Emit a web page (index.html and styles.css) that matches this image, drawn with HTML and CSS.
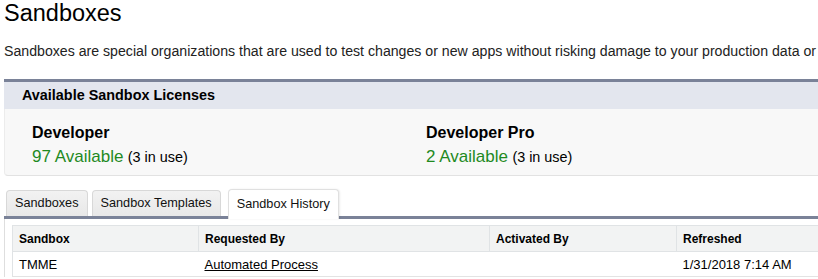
FILE: index.html
```html
<!DOCTYPE html>
<html>
<head>
<meta charset="utf-8">
<link rel="stylesheet" href="styles.css">
</head>
<body>
<div class="page">
  <h1 class="title">Sandboxes</h1>
  <p class="desc">Sandboxes are special organizations that are used to test changes or new apps without risking damage to your production data or</p>

  <div class="panel">
    <div class="panel-head">Available Sandbox Licenses</div>
    <div class="panel-body">
      <div class="lic">
        <div class="lic-name">Developer</div>
        <div class="lic-count"><span class="avail">97 Available</span> <span class="inuse">(3 in use)</span></div>
      </div>
      <div class="lic">
        <div class="lic-name">Developer Pro</div>
        <div class="lic-count"><span class="avail">2 Available</span> <span class="inuse">(3 in use)</span></div>
      </div>
    </div>
  </div>

  <div class="tabs">
    <div class="tab">Sandboxes</div>
    <div class="tab">Sandbox Templates</div>
    <div class="tab active">Sandbox History</div>
  </div>
  <div class="tab-content">
    <table class="list">
      <colgroup>
        <col class="c1"><col class="c2"><col class="c3"><col class="c4">
      </colgroup>
      <thead>
        <tr><th>Sandbox</th><th>Requested By</th><th>Activated By</th><th>Refreshed</th></tr>
      </thead>
      <tbody>
        <tr><td>TMME</td><td><a href="#" class="link">Automated Process</a></td><td></td><td>1/31/2018 7:14 AM</td></tr>
      </tbody>
    </table>
  </div>
</div>
</body>
</html>
```

FILE: styles.css
```css
html, body {
  margin: 0;
  padding: 0;
  overflow: hidden;
  background: #fff;
}
body {
  font-family: "Liberation Sans", Arial, sans-serif;
  color: #000;
}
.page {
  width: 1000px;
  padding-left: 4px;
}
.title {
  margin: 0;
  font-size: 23.5px;
  font-weight: normal;
  line-height: 27px;
}
.desc {
  margin: 17px 0 0;
  font-size: 14.15px;
  line-height: 15px;
  white-space: nowrap;
  color: #222;
}
.panel {
  margin-top: 20px;
  border-top: 3px solid #7a8298;
}
.panel-head {
  background: #e3e6ee;
  height: 27px;
  line-height: 27px;
  padding-left: 18px;
  font-size: 14.4px;
  font-weight: bold;
}
.panel-body {
  display: grid;
  grid-template-columns: 394px 394px;
  background: #f8f8f8;
  padding: 15px 0 8px 27px;
  border-left: 1px solid #ececec;
  border-bottom: 1px solid #e2e2e2;
  border-bottom-left-radius: 4px;
}
.lic-name {
  font-size: 16px;
  font-weight: bold;
  line-height: 18px;
}
.lic-count {
  margin-top: 5px;
  line-height: 20px;
}
.avail {
  font-size: 17px;
  color: #1f8a1f;
}
.inuse {
  font-size: 14.4px;
}
.tabs {
  display: flex;
  align-items: flex-end;
  margin-top: 13px;
  padding-left: 2px;
  border-bottom: 3px solid #7a8298;
  border-top-left-radius: 4px;
}
.tab {
  font-size: 12.7px;
  line-height: 25px;
  padding: 0 8px;
  margin-right: 4px;
  background: linear-gradient(#f2f2f2, #e8e8e8);
  border: 1px solid #d8d8d8;
  border-bottom: none;
  border-radius: 4px 4px 0 0;
  color: #111;
}
.tab.active {
  margin-left: 3px;
  padding: 2px 8px 2px 8px;
  background: #fff;
  border-color: #e0e0e0;
  margin-bottom: -3px;
  box-shadow: 1px 0 2px rgba(0,0,0,0.08);
}
.tab-content {
  border-left: 1px solid #dedede;
  padding: 6px 0 0 7px;
}
.list {
  border-collapse: collapse;
  table-layout: fixed;
  width: 904px;
  border: 1px solid #e0e3e5;
}
.c1 { width: 186px; }
.c2 { width: 291px; }
.c3 { width: 187px; }
.c4 { width: 240px; }
.list th {
  background: #f2f3f3;
  border: 1px solid #e0e3e5;
  height: 25px;
  padding: 0 6px;
  text-align: left;
  font-size: 12px;
  font-weight: bold;
}
.list td {
  height: 23px;
  padding: 1px 6px 0;
  font-size: 13px;
  border-bottom: 1px solid #e3e3e3;
}
.link {
  color: #000;
  text-decoration: underline;
}
```
